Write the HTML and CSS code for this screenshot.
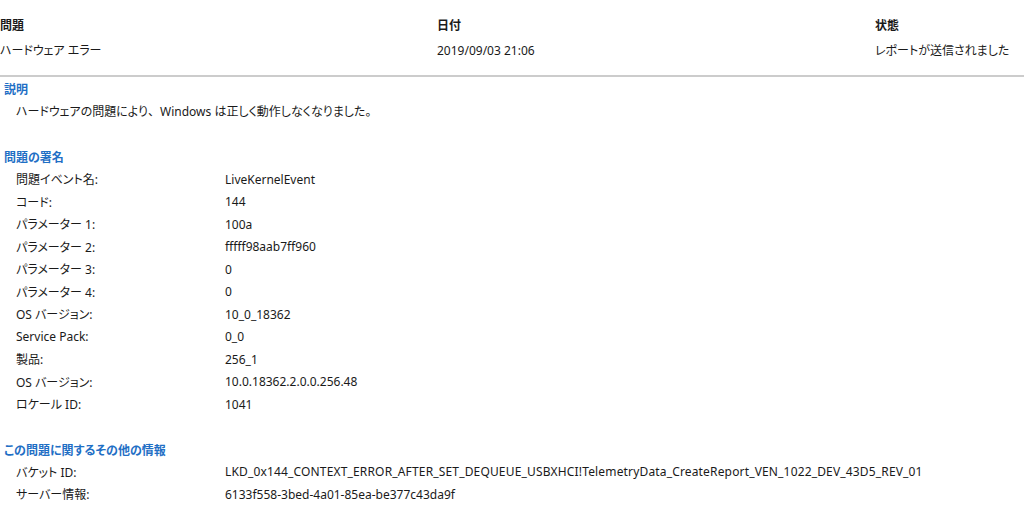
FILE: index.html
```html
<!DOCTYPE html>
<html lang="ja">
<head>
    <meta charset="UTF-8">
    <title>問題の詳細</title>
    <link rel="stylesheet" href="styles.css">
</head>
<body>
    <!-- Summary -->
    <div class="summary">
        <div class="col col-problem">
            <div class="col-head">問題</div>
            <div class="col-value">ハードウェア エラー</div>
        </div>
        <div class="col col-date">
            <div class="col-head">日付</div>
            <div class="col-value">2019/09/03 21:06</div>
        </div>
        <div class="col col-status">
            <div class="col-head">状態</div>
            <div class="col-value">レポートが送信されました</div>
        </div>
    </div>

    <!-- Description -->
    <div class="section">
        <h2>説明</h2>
        <p class="desc">ハードウェアの問題により<span class="wide">、</span>Windows は正しく動作しなくなりました。</p>
    </div>

    <!-- Signature -->
    <div class="section">
        <h2>問題の署名</h2>
        <table>
            <tr><td>問題イベント名:</td><td>LiveKernelEvent</td></tr>
            <tr><td>コード:</td><td>144</td></tr>
            <tr><td>パラメーター 1:</td><td>100a</td></tr>
            <tr><td>パラメーター 2:</td><td>fffff98aab7ff960</td></tr>
            <tr><td>パラメーター 3:</td><td>0</td></tr>
            <tr><td>パラメーター 4:</td><td>0</td></tr>
            <tr><td>OS バージョン:</td><td>10_0_18362</td></tr>
            <tr><td>Service Pack:</td><td>0_0</td></tr>
            <tr><td>製品:</td><td>256_1</td></tr>
            <tr><td>OS バージョン:</td><td>10.0.18362.2.0.0.256.48</td></tr>
            <tr><td>ロケール ID:</td><td>1041</td></tr>
        </table>
    </div>

    <!-- Extra info -->
    <div class="section">
        <h2>この問題に関するその他の情報</h2>
        <table>
            <tr><td>バケット ID:</td><td class="bucket">LKD_0x144_CONTEXT_ERROR_AFTER_SET_DEQUEUE_USBXHCI!TelemetryData_CreateReport_VEN_1022_DEV_43D5_REV_01</td></tr>
            <tr><td>サーバー情報:</td><td>6133f558-3bed-4a01-85ea-be377c43da9f</td></tr>
        </table>
    </div>
</body>
</html>
```

FILE: styles.css
```css
body {
    font-family: "Noto Sans", "Noto Sans CJK JP", sans-serif;
    font-size: 12px;
    font-feature-settings: "palt";
    color: #1a1a1a;
    background: #ffffff;
    margin: 0;
    padding: 0;
}
.summary {
    display: grid;
    grid-template-columns: 437px 438px auto;
    padding-top: 17px;
    padding-bottom: 15px;
    border-bottom: 2px solid #cccccc;
}
.col-head {
    font-weight: bold;
    line-height: 18px;
    margin-bottom: 7px;
}
.col-value {
    line-height: 18px;
}
.section {
    padding-left: 4px;
}
.section h2 {
    font-size: 12px;
    font-weight: bold;
    color: #1f6fc5;
    margin: 0;
    padding-top: 4px;
    line-height: 18px;
}
.desc {
    margin: 4px 0 0 12px;
    line-height: 18px;
    height: 42px;
}
.wide {
    font-feature-settings: normal;
}
table {
    border-collapse: collapse;
    margin: 1px 0 22px 12px;
}
td {
    padding: 0;
    height: 22.5px;
    white-space: nowrap;
}
td:first-child {
    width: 209px;
}
.bucket {
    letter-spacing: 0.16px;
}
```
